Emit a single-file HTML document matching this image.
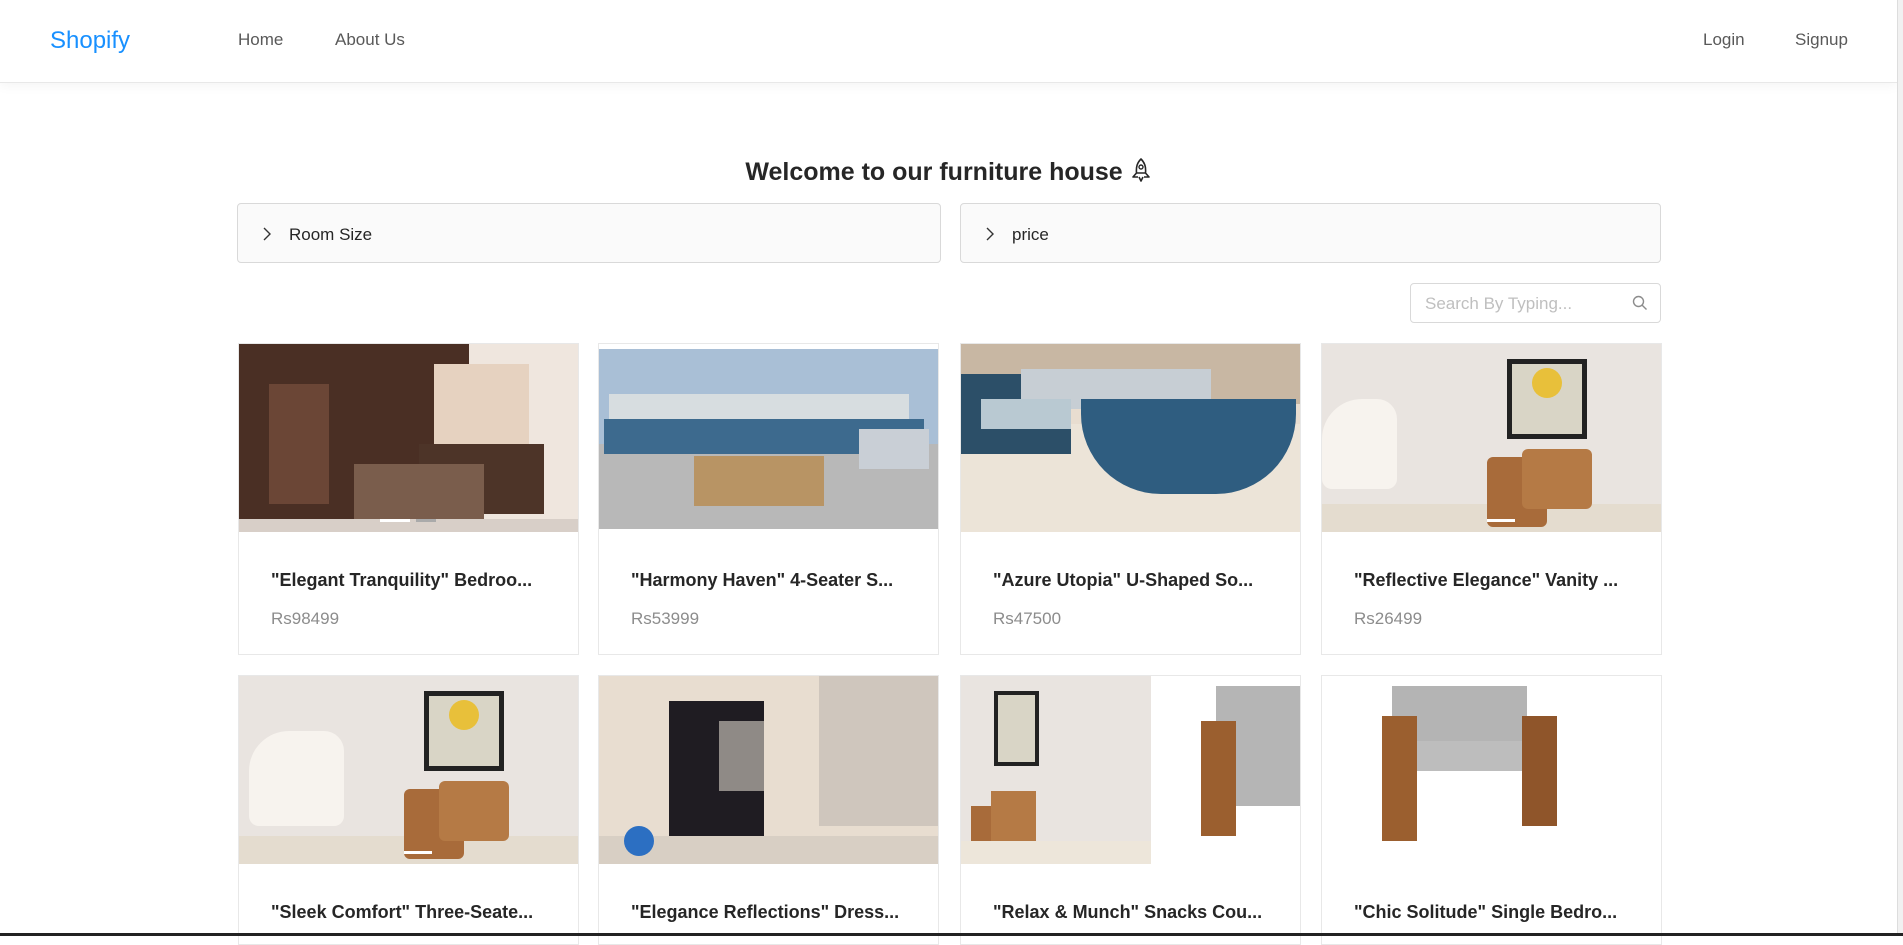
<!DOCTYPE html>
<html><head><meta charset="utf-8">
<style>
*{box-sizing:border-box;margin:0;padding:0}
body{width:1903px;height:936px;overflow:hidden;background:#fff;font-family:"Segoe UI","Liberation Sans",sans-serif;position:relative;color:rgba(0,0,0,.85)}
.nav{position:absolute;left:0;top:0;width:1897px;height:83px;border-bottom:1px solid #e8e8e8;box-shadow:0 2px 12px rgba(0,0,0,.05);background:#fff}
.nav a{position:absolute;top:30px;font-size:17px;color:#595959;text-decoration:none}
.logo{position:absolute;left:50px;top:27px;font-size:24px;color:#1890ff}
h1{position:absolute;left:0;width:1897px;top:157px;text-align:center;font-size:25px;font-weight:600;color:#262626}
.coll{position:absolute;top:203px;height:60px;background:#fafafa;border:1px solid #d9d9d9;border-radius:4px;font-size:17px;color:#262626}
.coll svg{position:absolute;left:24px;top:23px}
.coll b{position:absolute;left:51px;top:21px;font-weight:400}
.search{position:absolute;left:1410px;top:283px;width:251px;height:40px;border:1px solid #d9d9d9;border-radius:4px}
.search i{position:absolute;left:14px;top:10px;font-style:normal;font-size:17px;color:#bfbfbf}
.card{position:absolute;width:341px;border:1px solid #e8e8e8;background:#fff;overflow:hidden}
.img{position:absolute;left:0;top:0;width:100%;height:188px;overflow:hidden}
.img div{position:absolute}
.t{position:absolute;left:32px;top:226px;font-size:18px;font-weight:600;color:#262626;white-space:nowrap}
.p{position:absolute;left:32px;top:265px;font-size:17px;color:#8c8c8c}
.dot{height:3px;background:#fff}
</style></head><body>
<div class="nav">
<div class="logo">Shopify</div>
<a style="left:238px">Home</a><a style="left:335px">About Us</a>
<a style="left:1703px">Login</a><a style="left:1795px">Signup</a>
</div>
<h1>Welcome to our furniture house <svg width="22" height="26" viewBox="0 0 22 26" style="vertical-align:-3px"><path d="M11 2C7 6 6 10 6.5 16h9C16 10 15 6 11 2zM6.5 16L3 20h5M15.5 16l3.5 4h-5M9 20l2 4 2-4" fill="none" stroke="#262626" stroke-width="1.6" stroke-linejoin="round"/><circle cx="11" cy="10" r="2" fill="none" stroke="#262626" stroke-width="1.4"/></svg></h1>
<div class="coll" style="left:237px;width:704px"><svg width="10" height="14" viewBox="0 0 10 14"><path d="M2 1l6 6-6 6" fill="none" stroke="#333" stroke-width="1.4"/></svg><b>Room Size</b></div>
<div class="coll" style="left:960px;width:701px"><svg width="10" height="14" viewBox="0 0 10 14"><path d="M2 1l6 6-6 6" fill="none" stroke="#333" stroke-width="1.4"/></svg><b>price</b></div>
<div class="search"><i>Search By Typing...</i>
<svg style="position:absolute;right:12px;top:11px" width="16" height="16" viewBox="0 0 16 16"><circle cx="6.5" cy="6.5" r="5" fill="none" stroke="#8c8c8c" stroke-width="1.4"/><path d="M10.2 10.2L14.5 14.5" stroke="#8c8c8c" stroke-width="1.4"/></svg></div>

<div class="card" style="left:238px;top:343px;height:312px">
<div class="img" style="background:#efe6de">
<div style="left:0;top:0;width:230px;height:188px;background:#4a2f24"></div>
<div style="left:30px;top:40px;width:60px;height:120px;background:#6b4636"></div>
<div style="left:195px;top:20px;width:95px;height:120px;background:#e6d2c0"></div>
<div style="left:180px;top:100px;width:125px;height:70px;background:#4d3428"></div>
<div style="left:115px;top:120px;width:130px;height:55px;background:#7a5d4c"></div>
<div style="left:0;top:175px;width:341px;height:13px;background:#d8cfc8"></div>
<div class="dot" style="left:141px;top:175px;width:30px"></div><div class="dot" style="left:177px;top:175px;width:20px;background:#aaa"></div>
</div><div class="t">"Elegant Tranquility" Bedroo...</div><div class="p">Rs98499</div></div>

<div class="card" style="left:598px;top:343px;height:312px">
<div class="img" style="background:#fff">
<div style="left:0;top:5px;width:341px;height:180px;background:#a9bfd6"></div>
<div style="left:0;top:100px;width:341px;height:85px;background:#b8b8b8"></div>
<div style="left:10px;top:50px;width:300px;height:55px;background:#d7dde0"></div>
<div style="left:5px;top:75px;width:320px;height:35px;background:#3d6a8e"></div>
<div style="left:260px;top:85px;width:70px;height:40px;background:#c9cfd6"></div>
<div style="left:95px;top:112px;width:130px;height:50px;background:#b89464"></div>
</div><div class="t">"Harmony Haven" 4-Seater S...</div><div class="p">Rs53999</div></div>

<div class="card" style="left:960px;top:343px;height:312px">
<div class="img" style="background:#e8ddd0">
<div style="left:0;top:0;width:341px;height:60px;background:#c8b7a3"></div>
<div style="left:0;top:80px;width:341px;height:108px;background:#ece4d8"></div>
<div style="left:0;top:30px;width:110px;height:80px;background:#2c4f68"></div>
<div style="left:60px;top:25px;width:190px;height:40px;background:#c7ced4"></div>
<div style="left:120px;top:55px;width:215px;height:95px;background:#2f5d80;border-radius:0 0 80px 80px"></div>
<div style="left:20px;top:55px;width:90px;height:30px;background:#b9c9d2"></div>
</div><div class="t">"Azure Utopia" U-Shaped So...</div><div class="p">Rs47500</div></div>

<div class="card" style="left:1321px;top:343px;height:312px">
<div class="img" style="background:#e9e4e0">
<div style="left:185px;top:15px;width:80px;height:80px;background:#222"></div>
<div style="left:190px;top:20px;width:70px;height:70px;background:#d9d5c6"></div>
<div style="left:210px;top:24px;width:30px;height:30px;background:#e8c03a;border-radius:50%"></div>
<div style="left:0;top:160px;width:341px;height:28px;background:#e4dccf"></div>
<div style="left:0;top:55px;width:75px;height:90px;background:#f7f3ee;border-radius:40px 20px 10px 10px"></div>
<div style="left:165px;top:113px;width:60px;height:70px;background:#a86b3a;border-radius:6px"></div>
<div style="left:200px;top:105px;width:70px;height:60px;background:#b57a45;border-radius:6px"></div>
<div class="dot" style="left:165px;top:175px;width:28px"></div>
</div><div class="t">"Reflective Elegance" Vanity ...</div><div class="p">Rs26499</div></div>

<div class="card" style="left:238px;top:675px;height:270px">
<div class="img" style="background:#e9e4e0">
<div style="left:185px;top:15px;width:80px;height:80px;background:#222"></div>
<div style="left:190px;top:20px;width:70px;height:70px;background:#d9d5c6"></div>
<div style="left:210px;top:24px;width:30px;height:30px;background:#e8c03a;border-radius:50%"></div>
<div style="left:0;top:160px;width:341px;height:28px;background:#e4dccf"></div>
<div style="left:10px;top:55px;width:95px;height:95px;background:#f7f3ee;border-radius:40px 20px 10px 10px"></div>
<div style="left:165px;top:113px;width:60px;height:70px;background:#a86b3a;border-radius:6px"></div>
<div style="left:200px;top:105px;width:70px;height:60px;background:#b57a45;border-radius:6px"></div>
<div class="dot" style="left:165px;top:175px;width:28px"></div>
</div><div class="t">"Sleek Comfort" Three-Seate...</div></div>

<div class="card" style="left:598px;top:675px;height:270px">
<div class="img" style="background:#e8ddd0">
<div style="left:220px;top:0;width:121px;height:150px;background:#cfc6bd"></div>
<div style="left:70px;top:25px;width:95px;height:160px;background:#1f1c22"></div>
<div style="left:120px;top:45px;width:45px;height:70px;background:#8f8a86"></div>
<div style="left:0;top:160px;width:341px;height:28px;background:#d8cfc4"></div>
<div style="left:25px;top:150px;width:30px;height:30px;background:#2c6fc2;border-radius:50%"></div>
</div><div class="t">"Elegance Reflections" Dress...</div></div>

<div class="card" style="left:960px;top:675px;height:270px">
<div class="img" style="background:#fff">
<div style="left:0;top:0;width:190px;height:188px;background:#e9e4e0"></div>
<div style="left:33px;top:15px;width:45px;height:75px;background:#222"></div>
<div style="left:37px;top:19px;width:37px;height:67px;background:#d9d5c6"></div>
<div style="left:10px;top:130px;width:40px;height:50px;background:#a86b3a"></div>
<div style="left:30px;top:115px;width:45px;height:50px;background:#b57a45"></div>
<div style="left:0;top:165px;width:190px;height:23px;background:#ede6da"></div>
<div style="left:255px;top:10px;width:86px;height:120px;background:#b5b5b5"></div>
<div style="left:240px;top:45px;width:35px;height:115px;background:#9b5f2f"></div>
</div><div class="t">"Relax &amp; Munch" Snacks Cou...</div></div>

<div class="card" style="left:1321px;top:675px;height:270px">
<div class="img" style="background:#fff">
<div style="left:70px;top:10px;width:135px;height:70px;background:#b4b4b4"></div>
<div style="left:70px;top:65px;width:165px;height:30px;background:#bdbdbd"></div>
<div style="left:60px;top:40px;width:35px;height:125px;background:#9b5f2f"></div>
<div style="left:200px;top:40px;width:35px;height:110px;background:#8f552a"></div>
</div><div class="t">"Chic Solitude" Single Bedro...</div></div>

<div style="position:absolute;right:0;top:0;width:6px;height:936px;background:#f1f1f1;border-left:1px solid #ddd"></div>
<div style="position:absolute;left:0;top:933px;width:1903px;height:3px;background:#222"></div>
</body></html>
